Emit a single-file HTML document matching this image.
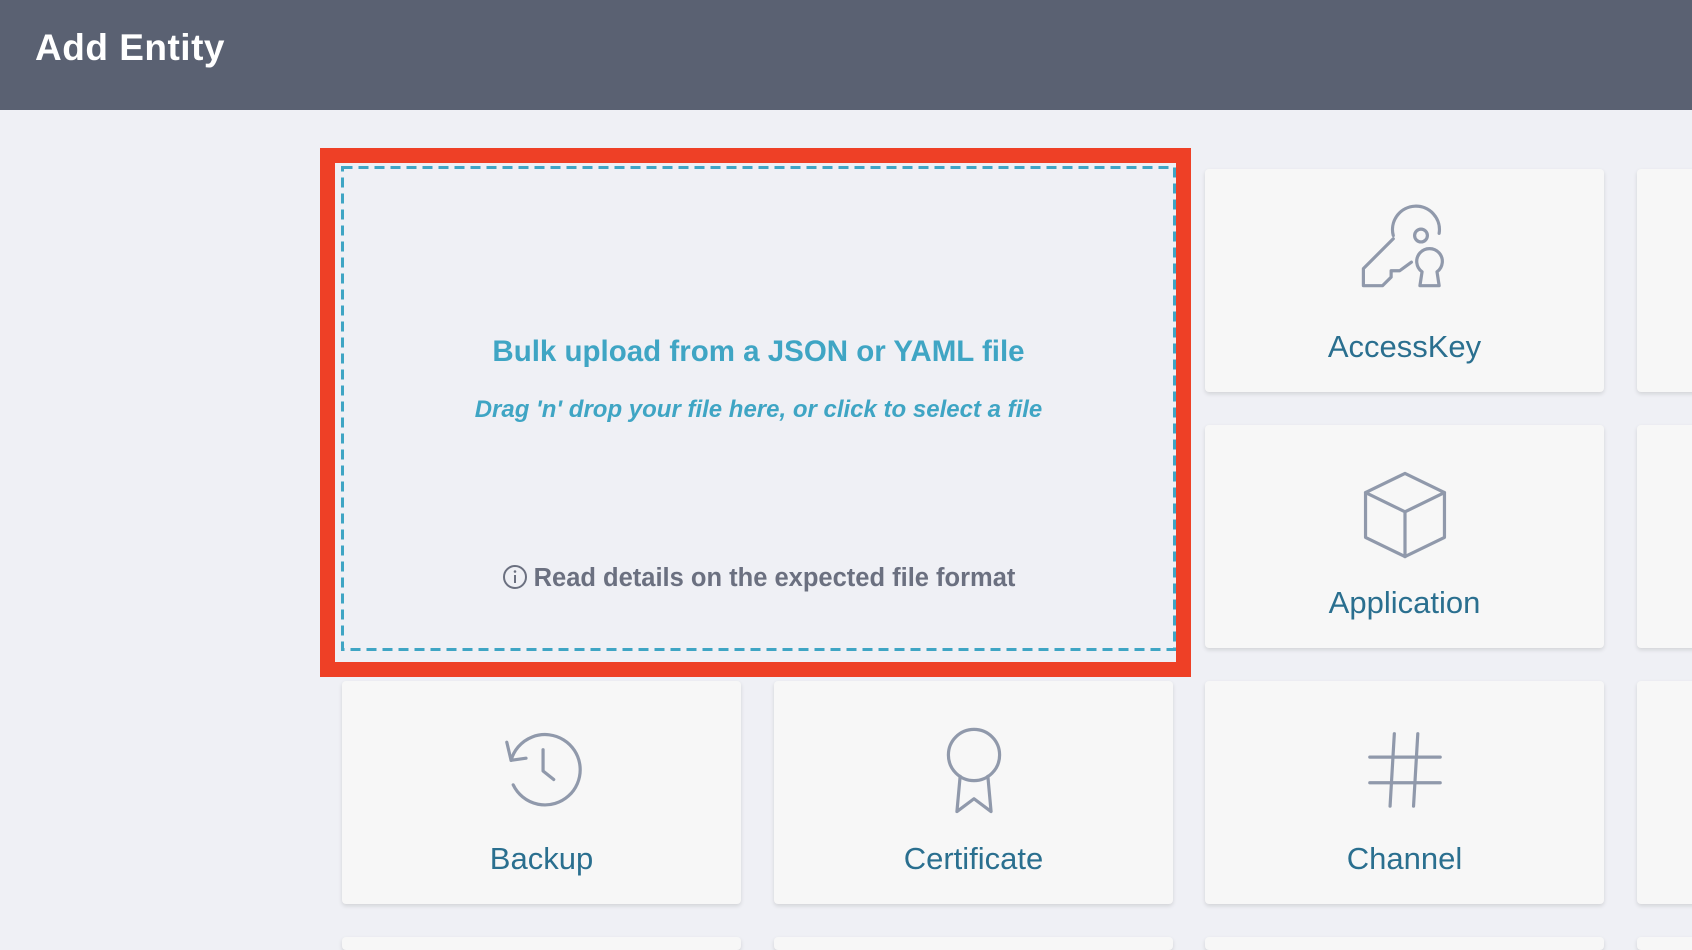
<!DOCTYPE html>
<html><head><style>
*{margin:0;padding:0;box-sizing:border-box}
html,body{width:1692px;height:950px;overflow:hidden}
body{background:#eff0f5;font-family:"Liberation Sans",sans-serif;position:relative}
.hd{position:absolute;left:0;top:0;width:1692px;height:110px;background:#5a6172}
.hd h1{position:absolute;left:35px;top:27px;color:#fff;font-size:37px;font-weight:bold;letter-spacing:0.5px}
.card{position:absolute;width:399px;height:223px;background:#f7f7f7;border-radius:4px;box-shadow:0 2px 4px rgba(0,0,0,0.12)}
.card svg{position:absolute;left:152px;top:42px;width:96px;height:96px;fill:none;stroke:#9099ab;stroke-width:3;stroke-linecap:round;stroke-linejoin:round;overflow:visible}
.card .l{position:absolute;left:0;right:0;top:160px;text-align:center;color:#2a6f8f;font-size:31px}
.red{position:absolute;left:320px;top:148px;width:871px;height:529px;border:15px solid #ee4026;background:#eff0f5}
.t1{position:absolute;left:342px;width:833px;top:335px;text-align:center;color:#3fa5c4;font-size:29.5px;font-weight:bold}
.t2{position:absolute;left:342px;width:833px;top:396px;text-align:center;color:#3fa5c4;font-size:24px;font-style:italic;font-weight:bold}
.t3{position:absolute;left:342px;width:833px;top:564px;text-align:center;color:#6b7080;font-size:25.5px;font-weight:bold}
</style></head><body>
<div class="hd"><h1>Add Entity</h1></div>
<div class="red"></div>
<svg style="position:absolute;left:341px;top:166px" width="835" height="485"><rect x="1.5" y="1.5" width="832" height="482" fill="none" stroke="#3fa5c4" stroke-width="3" stroke-dasharray="10 6"/></svg>
<div class="t1">Bulk upload from a JSON or YAML file</div>
<div class="t2">Drag 'n' drop your file here, or click to select a file</div>
<div class="t3"><svg width="26" height="26" viewBox="0 0 26 26" style="vertical-align:-4px;margin-right:6px"><circle cx="13" cy="13" r="11" fill="none" stroke="#6b7080" stroke-width="2"/><line x1="13" y1="11" x2="13" y2="19" stroke="#6b7080" stroke-width="2"/><circle cx="13" cy="7.5" r="1.3" fill="#6b7080"/></svg>Read details on the expected file format</div>

<div class="card" style="left:1205px;top:169px"><svg viewBox="0 0 90 90"><path d="M34 23 A22 22 0 1 1 77 21"/><circle cx="60" cy="23" r="6"/><path d="M34 26 L6 54 V70 H24 L32 62 V56 H40 L51 48"/><path d="M59 70 L61 57 A12 12 0 1 1 75 57 L77 70 Z"/></svg><div class="l">AccessKey</div></div>
<div class="card" style="left:1205px;top:425px"><svg viewBox="0 0 90 90"><path d="M45 6 L82 24 V66 L45 84 L8 66 V24 Z"/><path d="M8 24 L45 42 L82 24 M45 42 V84"/></svg><div class="l">Application</div></div>
<div class="card" style="left:342px;top:681px"><svg viewBox="0 0 90 90"><path d="M16 35 A33 33 0 1 1 18 58"/><path d="M12 18 L16 35 L30 33"/><path d="M46 25 V45 L56 53"/></svg><div class="l">Backup</div></div>
<div class="card" style="left:774px;top:681px"><svg viewBox="0 0 90 90"><circle cx="45" cy="30" r="24"/><path d="M32 50 L29 83 L45 71 L61 83 L58 50"/></svg><div class="l">Certificate</div></div>
<div class="card" style="left:1205px;top:681px"><svg viewBox="0 0 90 90"><path d="M35 10 L31 78 M57 10 L53 78 M12 32 H78 M12 56 H78"/></svg><div class="l">Channel</div></div>
<div class="card" style="left:1637px;top:169px"></div>
<div class="card" style="left:1637px;top:425px"></div>
<div class="card" style="left:1637px;top:681px"></div>
<div class="card" style="left:342px;top:937px;height:13px"></div>
<div class="card" style="left:774px;top:937px;height:13px"></div>
<div class="card" style="left:1205px;top:937px;height:13px"></div>
<div class="card" style="left:1637px;top:937px;height:13px"></div>
</body></html>
